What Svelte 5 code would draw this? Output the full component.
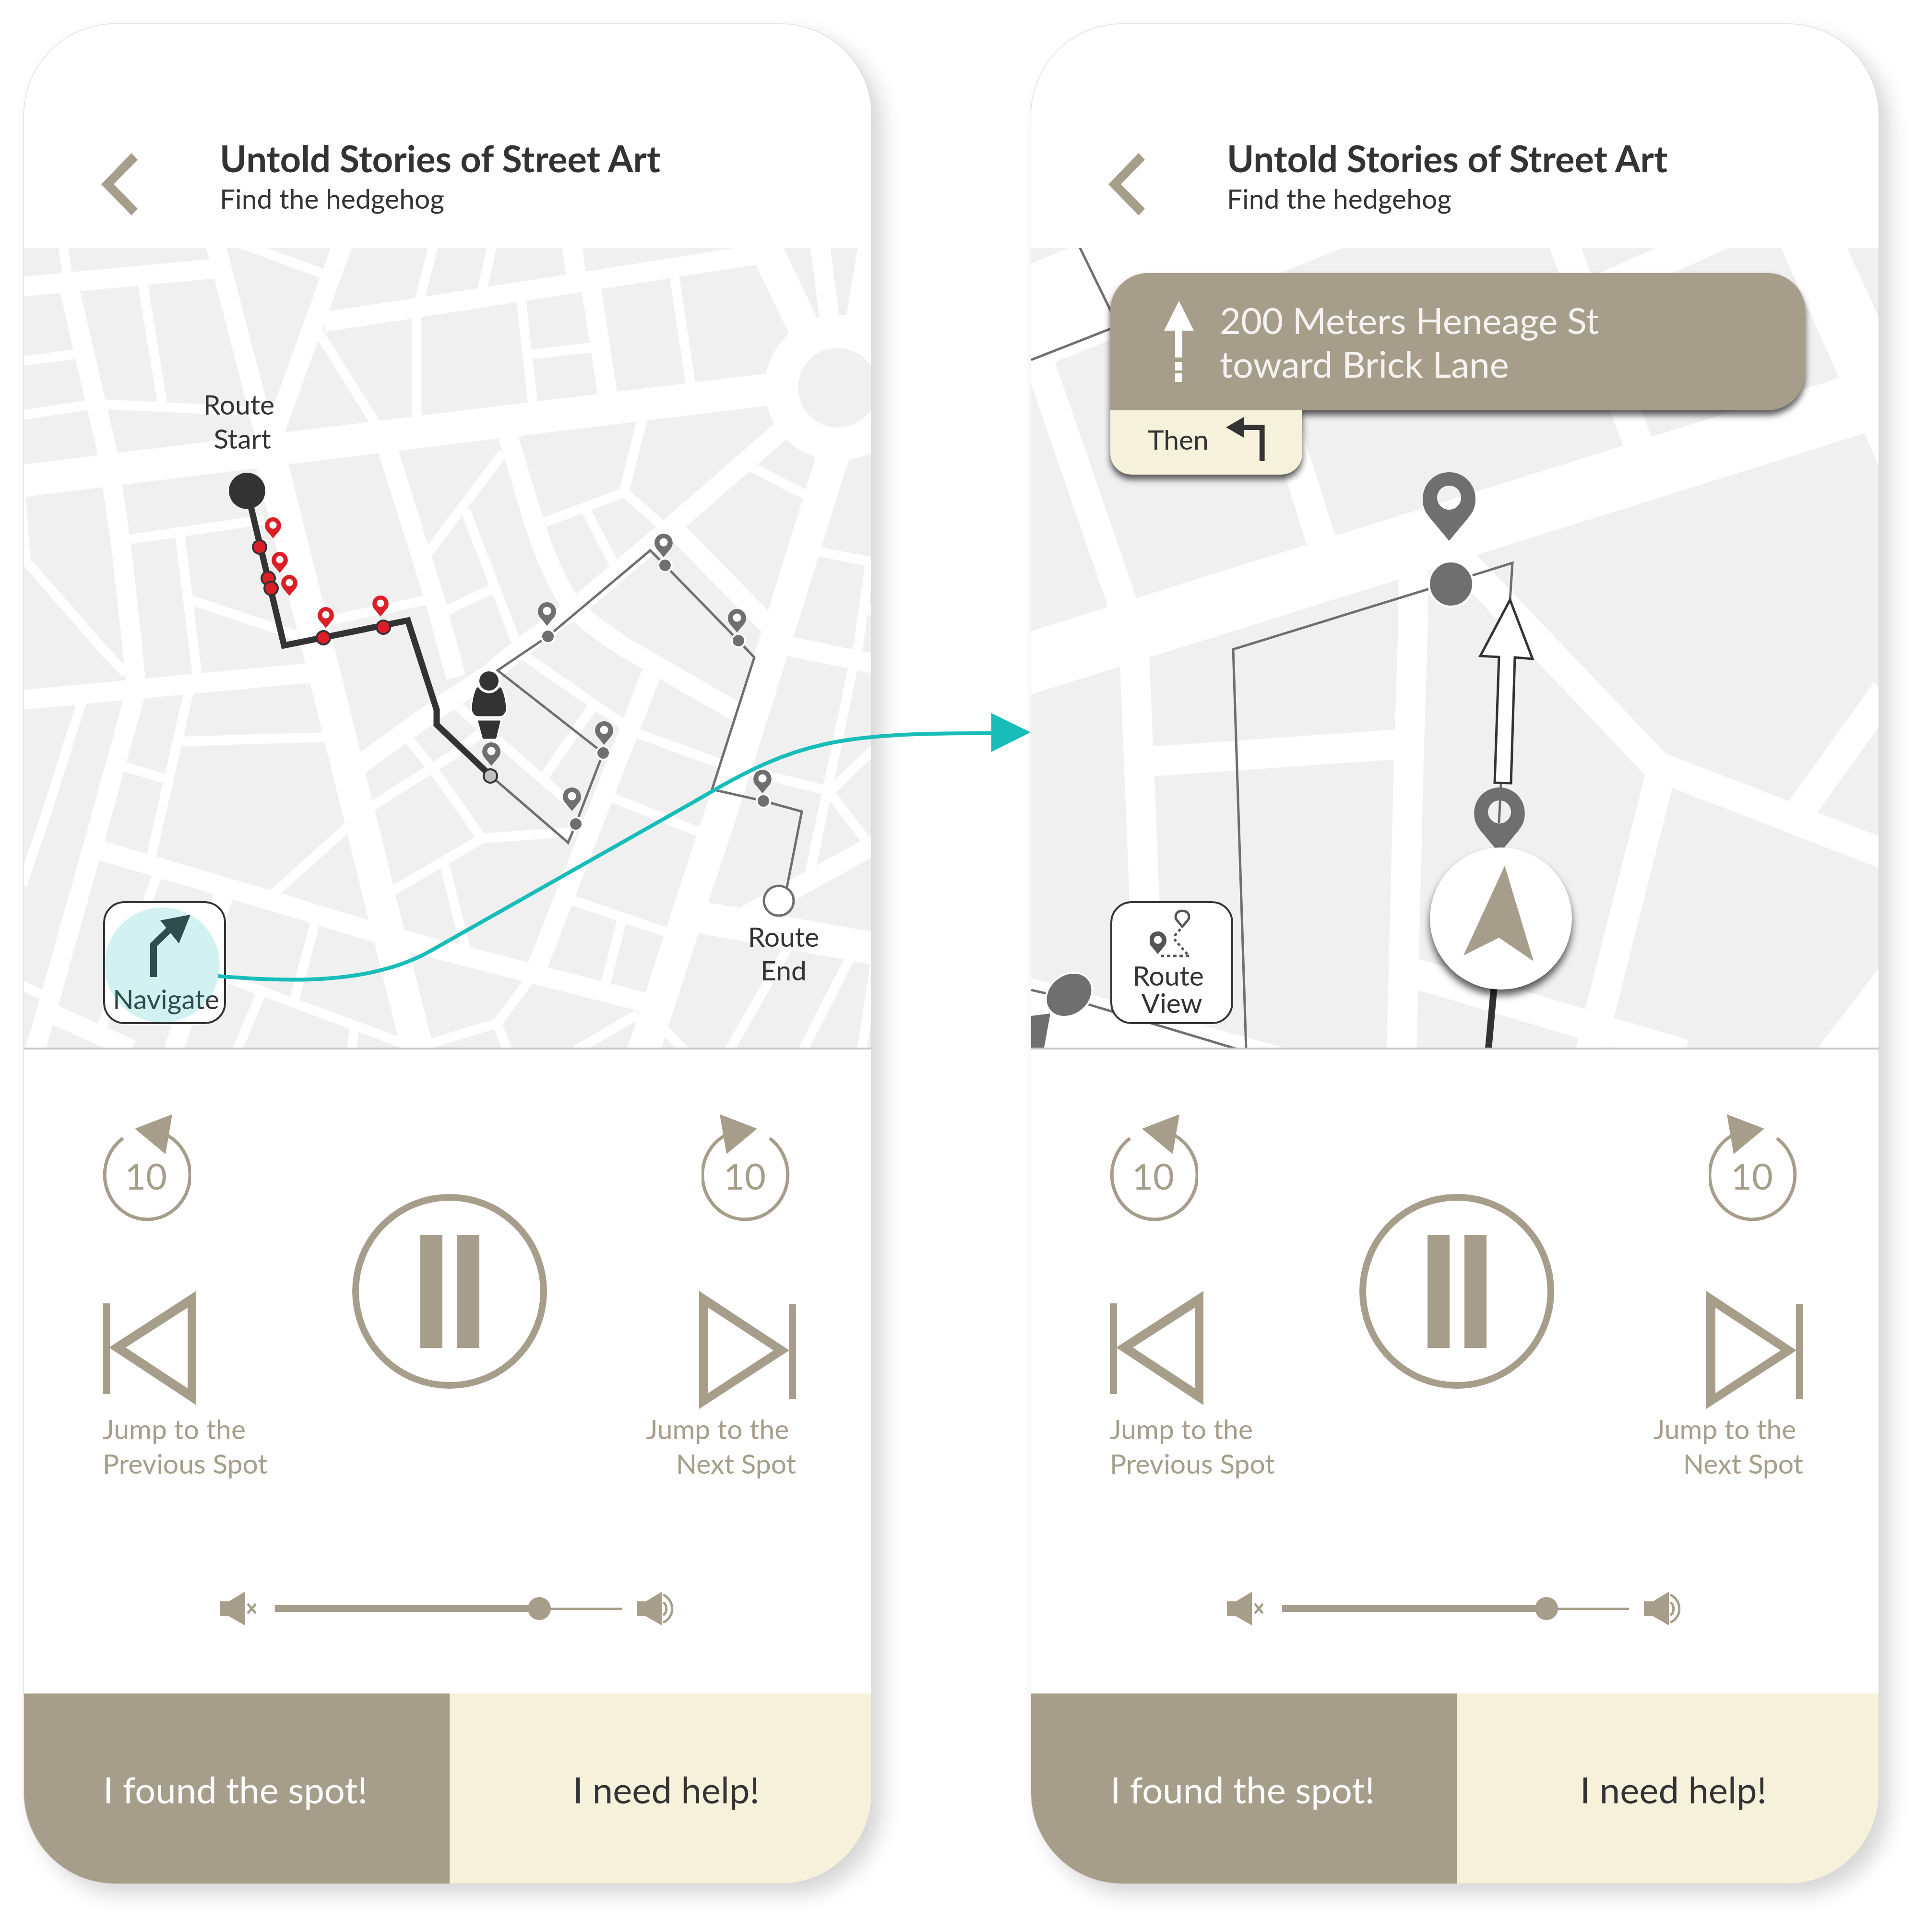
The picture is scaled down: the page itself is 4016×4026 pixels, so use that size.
<script>
  const title = 'Untold Stories of Street Art';
  const subtitle = 'Find the hedgehog';

  let volumes = $state([78, 78]);

  // Pin outline, drawn from its top centre; the tip is 143 units below.
  const pinShape =
    'M0 0C31 0 55 25 55 56C55 75 48 85 40 95L0 143L-40 95C-48 85 -55 75 -55 56C-55 25 -31 0 0 0Z';
  const pinHole = 'M0 28a25 25 0 1 0 .1 0Z';

  // Streets of the overview map, grouped by road class.
  const lanes = [
    'M131 510L140 572', 'M44 1037L53 1165', 'M40 754L165 738', 'M40 867L190 844', 'M190 842L436 854L520 857',
    'M297 590L339 845', 'M500 508L680 574', 'M904 510L875 625', 'M665 695L785 887', 'M868 640V895',
    'M1026 510L1005 605', 'M1086 625L1111 848', 'M1105 740L1240 724', 'M1405 575L1440 805',
    'M1339 872L1300 1028L1135 1089', 'M1298 1024L1380 1096', 'M1220 1062L1280 1177', 'M1048 945L888 1158',
    'M970 1064L1074 1335', 'M912 1282L1026 1228', 'M262 1126L550 1084', 'M375 1115L411 1408',
    'M400 1252L620 1326', 'M670 1297L890 1251', 'M50 1165L211 1350L262 1404', 'M170 1464L97 1695L46 1845',
    'M394 1440L315 1786', 'M328 1824L212 2142', 'M378 1546L680 1537', 'M258 1598L344 1624',
    'M568 1865L724 1725', 'M657 1922L614 2084', 'M470 2038L580 2079L786 2155L880 2192', 'M544 2070L494 2190',
    'M739 2142L732 2190', 'M46 2054L92 2077', 'M850 1540L901 1602L930 1642L1004 1748L1200 1734',
    'M1005 1748L927 1794L820 1856', 'M926 1800L970 1975', 'M775 1681L940 1577L1000 1530',
    'M948 1468L1037 1544L1185 1672', 'M1092 1367L1300 1511', 'M1235 1474L1136 1617', 'M1101 2046L1036 2133L880 2181',
    'M1035 2130L1058 2192', 'M1328 1529L1500 1592', 'M1278 1664L1458 1735', 'M1190 1876L1390 1944',
    'M1296 1918L1261 2055', 'M1566 974L1682 1034', 'M1704 1150L1826 1174', 'M1813 1178L1788 1350L1776 1400L1688 1820',
    'M1804 1270L1826 1276', 'M1558 1607L1730 1650L1826 1557', 'M1724 1646L1802 1748', 'M1642 1976L1520 2190',
    'M1771 1998L1673 2190', 'M1824 2010L1796 2190', 'M1330 2114L1200 2190', 'M1386 2149L1430 2193'
  ].join('');

  const streets = [
    'M40 599L455 560', 'M449 510L531 825L560 940', 'M145 605L224 944L252 1134L276 1350L283 1425L279 1457L196 1756L102 2090L72 2194',
    'M714 510L570 907', 'M675 672L930 633L1600 528', 'M1192 510L1201 580', 'M1228 575L1268 835', 'M1709 510L1732 690',
    'M1640 888L1406 1092L1216 1253L1081 1355L1017 1408L940 1458L750 1594',
    'M1056 900L1111 1083C1135 1160 1165 1225 1190 1260C1215 1290 1250 1316 1302 1350L1545 1490',
    'M800 912L907 1253L950 1412', 'M40 1460L690 1399', 'M205 1772L559 1876L772 1941L901 1976L1122 2033L1345 2090',
    'M466 1865L362 2190', 'M105 2112L275 2188', 'M1357 1405L1118 2020', 'M1412 1110L1600 1302',
    'M1640 1347L1826 1385', 'M1830 1757L1535 1920'
  ].join('');

  const avenues = [
    'M40 1004L940 893L1746 795', 'M562 950L681 1424L784 1843L871 2192', 'M1590 506L1705 745',
    'M1742 932L1636 1272L1520 1641L1425 1931L1340 2194', 'M1440 1909L1830 1979'
  ].join('');

  const spots = [
    [1386, 1179], [1142, 1327], [1539, 1336], [1257, 1570], [1200, 1718], [1591, 1670]
  ];
  const spotPins = [
    [1383, 1113], [1140, 1256], [1536, 1270], [1259, 1504], [1024, 1548], [1192, 1642], [1589, 1605]
  ];
  const visited = [[541, 1141], [559, 1206], [565, 1227], [674, 1330], [799, 1308]];
  const visitedPins = [[569, 1079], [583, 1151], [603, 1199], [679, 1266], [793, 1242]];

  // Streets of the close-up map.
  const nearStreets = [
    'M2140 680L2350 1289', 'M2660 830L2765 1165', 'M3256 500L3420 942', 'M3600 485L3290 623',
    'M2946 1190L2944 1330L2936 1585L2921 2194', 'M3035 1158L3220 1352L3455 1599', 'M3445 1594L3930 1782',
    'M3464 1600L3334 2112L3314 2194', 'M2930 2024L3510 2198', 'M3745 1700L3930 1442',
    'M2364 1360L2395 2120', 'M2395 1588L2915 1552'
  ].join('');
</script>

{#snippet pin(x, y, size, color)}
  <g transform="translate({x} {y}) scale({size})">
    <circle cx="0" cy="53" r="30" fill="#fff" />
    <path d={pinShape + pinHole} fill={color} fill-rule="evenodd" />
  </g>
{/snippet}

{#snippet heading()}
  <header class="top">
    <button class="plain back" aria-label="Back">
      <svg width="76" height="130" viewBox="0 0 76 130" aria-hidden="true">
        <path d="M63 0L76 14L26 65L76 116L63 130L0 65Z" fill="#a69e8a" />
      </svg>
    </button>
    <div>
      <h1>{title}</h1>
      <p class="subtitle">{subtitle}</p>
    </div>
  </header>
{/snippet}

{#snippet player(index)}
  <section class="player" aria-label="Player">
    <div class="side">
      <button class="plain skip" aria-label="Back 10 seconds">
        <svg width="184" height="224" viewBox="215 2322 184 224" aria-hidden="true">
          <path d="M257 2372A89 93 0 1 0 350 2366" fill="none" stroke="#a69e8a" stroke-width="7" />
          <path d="M360 2322L282 2352L346 2405Z" fill="#a69e8a" />
        </svg>
        <span class="seconds">10</span>
      </button>
      <button class="plain jump">
        <svg width="202" height="246" viewBox="215 2690 202 246" aria-hidden="true">
          <path d="M215 2716H230V2905H215Z" fill="#a69e8a" />
          <path d="M410 2690V2928L228 2808ZM392 2725L263 2808L392 2893Z" fill="#a69e8a" fill-rule="evenodd" />
        </svg>
        <span>Jump to the<br />Previous Spot</span>
      </button>
    </div>
    <button class="plain pause" aria-label="Pause">
      <svg width="406" height="406" viewBox="0 0 406 406" aria-hidden="true">
        <circle cx="203" cy="203" r="196" fill="none" stroke="#a69e8a" stroke-width="14" />
        <path d="M142 86H188V321H142ZM219 86H265V321H219Z" fill="#a69e8a" />
      </svg>
    </button>
    <div class="side end">
      <button class="plain skip forward" aria-label="Forward 10 seconds">
        <svg width="184" height="224" viewBox="0 0 184 224" aria-hidden="true">
          <path d="M142 50A89 93 0 1 1 49 44" fill="none" stroke="#a69e8a" stroke-width="7" />
          <path d="M38 0L116 30L52 83Z" fill="#a69e8a" />
        </svg>
        <span class="seconds">10</span>
      </button>
      <button class="plain jump">
        <svg width="202" height="246" viewBox="1456 2690 202 246" aria-hidden="true">
          <path d="M1643 2718H1658V2915H1643Z" fill="#a69e8a" />
          <path d="M1456 2690V2936L1644 2814ZM1475 2725L1611 2814L1475 2903Z" fill="#a69e8a" fill-rule="evenodd" />
        </svg>
        <span>Jump to the&nbsp;<br />Next Spot</span>
      </button>
    </div>
  </section>
  <div class="volume">
    <svg width="76" height="70" viewBox="0 0 76 70" aria-hidden="true">
      <path d="M0 20H19L52 0V70L19 51H0Z" fill="#a69e8a" />
      <path d="M58 25L75 45M75 25L58 45" stroke="#a69e8a" stroke-width="5" />
    </svg>
    <input
      type="range"
      min="0"
      max="100"
      aria-label="Volume"
      bind:value={volumes[index]}
      style="--fill: {volumes[index]}%"
    />
    <svg width="77" height="70" viewBox="0 0 77 70" aria-hidden="true">
      <path d="M0 20H19L52 0V70L19 51H0Z" fill="#a69e8a" />
      <path d="M55 6C80 18 80 53 55 64M55 22C64 28 64 43 55 49" fill="none" stroke="#a69e8a" stroke-width="5" />
    </svg>
  </div>
  <footer>
    <button class="found">I found the spot!</button>
    <button class="help">I need help!</button>
  </footer>
{/snippet}

<main>
  <article class="phone">
    {@render heading()}
    <div class="map">
      <svg class="canvas" viewBox="50 518 1766 1666" role="img" aria-label="Route map">
        <rect x="50" y="518" width="1766" height="1666" fill="#f0f0f0" />
        <g fill="none" stroke="#fff">
          <path d={lanes} stroke-width="20" />
          <path d={streets} stroke-width="41" />
          <path d={avenues} stroke-width="67" />
        </g>
        <path d="M1788 516L1762 670L1826 700V516Z" fill="#fff" />
        <circle cx="1746" cy="809" r="152" fill="#fff" />
        <circle cx="1746" cy="809" r="83" fill="#f0f0f0" />

        <path
          d="M1023 1618L1184 1757L1200 1718L1257 1570L1037 1398L1142 1327L1355 1148L1386 1179L1539 1336L1572 1371L1484 1646L1591 1670L1671 1692L1638 1860"
          fill="none" stroke="#6f6f6f" stroke-width="5" />
        {#each spots as [x, y]}
          <circle cx={x} cy={y} r="14" fill="#6f6f6f" stroke="#fff" stroke-width="4" />
        {/each}
        <circle cx="1623" cy="1878" r="31" fill="#fff" stroke="#6f6f6f" stroke-width="5" />

        <path d="M515 1024L592 1346L850 1294L910 1480V1511L1023 1618" fill="none" stroke="#333" stroke-width="13" />
        <circle cx="515" cy="1024" r="38" fill="#333" />
        {#each visited as [x, y]}
          <circle cx={x} cy={y} r="14" fill="#da1f26" stroke="#333" stroke-width="4" />
        {/each}
        {#each visitedPins as [x, y]}
          {@render pin(x, y, 0.306, '#da1f26')}
        {/each}
        <circle cx="1022" cy="1618" r="14" fill="#c0c0c0" stroke="#333" stroke-width="4" />
        {#each spotPins as [x, y]}
          {@render pin(x, y, 0.342, '#6f6f6f')}
        {/each}

        <g fill="#333" stroke="#fff" stroke-width="3">
          <path d="M993 1432C986 1445 982 1464 982 1478C982 1486 988 1495 996 1495H1042C1050 1495 1056 1486 1056 1478C1056 1464 1052 1445 1045 1432Z" />
          <path d="M994 1501H1045L1035 1542H1005Z" />
          <circle cx="1019" cy="1420" r="24" fill="#fff" />
          <circle cx="1019" cy="1420" r="20" stroke="none" />
        </g>

        <g class="place" text-anchor="middle">
          <text x="498" y="865">Route</text>
          <text x="505" y="936">Start</text>
          <text x="1633" y="1974">Route</text>
          <text x="1633" y="2044">End</text>
        </g>
      </svg>
      <button class="tile single">
        <svg width="112" height="132" viewBox="289 1906 112 132" aria-hidden="true">
          <path d="M319 2037V1970L357 1933" fill="none" stroke="#333" stroke-width="14" />
          <path d="M396 1907L333 1919L372 1967Z" fill="#333" />
        </svg>
        <span>Navigate</span>
      </button>
      <svg class="flow" viewBox="50 518 1766 1666" aria-hidden="true">
        <circle cx="338" cy="2012" r="120" fill="#18bdb9" fill-opacity="0.2" />
        <path
          d="M454 2035C590 2046 770 2056 900 1981L1460 1664C1660 1545 1750 1528 2070 1529"
          fill="none" stroke="#18bdb9" stroke-width="8" />
        <path d="M2066 1487L2148 1527L2066 1568Z" fill="#18bdb9" />
      </svg>
    </div>
    {@render player(0)}
  </article>

  <article class="phone">
    {@render heading()}
    <div class="map">
      <svg class="canvas" viewBox="2149 518 1766 1666" role="img" aria-label="Navigation map">
        <rect x="2149" y="518" width="1766" height="1666" fill="#f0f0f0" />
        <path d="M2149 550L2230 516H2804L2149 775Z" fill="#fff" />
        <path d="M2149 2039L2675 2184H2149ZM3920 2012L3789 2184H3920Z" fill="#fff" />
        <g fill="none" stroke="#fff">
          <path d={nearStreets} stroke-width="62" />
          <path d="M2120 1391L3950 818M3767 487L4000 1006" stroke-width="126" />
        </g>

        <g fill="none" stroke="#6f6f6f" stroke-width="5">
          <path d="M2250 516L2330 680L2149 751" />
          <path d="M2597 2186L2570 1354L3024 1214L3152 1174L3147 1251L3124 1716" />
          <path d="M2149 2064L2228 2082L2578 2187" />
        </g>
        <path d="M3128 1900L3102 2186" stroke="#333" stroke-width="14" />
        <ellipse cx="3024" cy="1218" rx="46" ry="47" fill="#6f6f6f" stroke="#fff" stroke-width="4" />
        <ellipse cx="2228" cy="2074" rx="52" ry="42" transform="rotate(-38 2228 2074)" fill="#6f6f6f" stroke="#fff" stroke-width="4" />
        <path d="M2149 2118L2189 2113L2176 2184H2149Z" fill="#6f6f6f" />
        <path
          d="M3147 1251L3085 1368L3124 1370L3115 1632L3149 1633L3157 1371L3194 1374Z"
          fill="#fff" stroke="#333" stroke-width="5" />
        <path d={pinShape + pinHole} transform="translate(3020 985)" fill="#6f6f6f" fill-rule="evenodd" />
        <path d={pinShape + pinHole} transform="translate(3125 1642) scale(0.96)" fill="#6f6f6f" fill-rule="evenodd" />
        <circle class="lifted" cx="3128" cy="1915" r="148" fill="#fff" />
        <path d="M3136 1805L3050 1992L3124 1955L3196 2004Z" fill="#a69e8a" />
      </svg>
      <section class="directions">
        <div class="now">
          <svg width="62" height="170" viewBox="2426 633 62 170" aria-hidden="true">
            <path d="M2457 633L2426 695H2449V751H2464V695H2488ZM2449 760H2464V778H2449ZM2449 784H2464V802H2449Z" fill="#fff" />
          </svg>
          <p>200 Meters Heneage St<br />toward Brick Lane</p>
        </div>
        <div class="then">
          <span>Then</span>
          <svg width="83" height="94" viewBox="2553 870 83 94" aria-hidden="true">
            <path d="M2553 892L2591 870V914Z" fill="#333" />
            <path d="M2588 892H2630V964" fill="none" stroke="#333" stroke-width="11" />
          </svg>
        </div>
      </section>
      <button class="tile">
        <svg width="92" height="102" viewBox="2396 1896 92 102" aria-hidden="true">
          <path d={pinShape + pinHole} transform="translate(2413 1943) scale(0.33)" fill="#555" fill-rule="evenodd" />
          <path d="M2464 1900C2480 1900 2480 1916 2475 1920L2464 1933L2453 1920C2448 1916 2448 1900 2464 1900Z" fill="none" stroke="#555" stroke-width="5" />
          <path d="M2460 1938L2449 1951V1961L2476 1992" fill="none" stroke="#555" stroke-width="5" stroke-dasharray="6 6" />
          <path d="M2419 1994H2480" stroke="#555" stroke-width="5" stroke-dasharray="7 6" />
        </svg>
        <span>Route&nbsp;<br />View</span>
      </button>
    </div>
    {@render player(1)}
  </article>
</main>

<style>
  :global(body) {
    margin: 0;
    background: #fff;
    font-family: Lato, 'Liberation Sans', sans-serif;
    color: #333;
  }

  main {
    display: grid;
    grid-template-columns: 1fr 1fr;
    gap: 333px;
    padding: 50px 101px 100px 50px;
  }

  .phone {
    display: flex;
    flex-direction: column;
    border-radius: 190px;
    background: #fff;
    box-shadow: 0 0 1px 1px #d4d4d4, 22px 22px 44px rgba(0, 0, 0, 0.17);
  }

  h1,
  p {
    margin: 0;
  }

  button {
    font: inherit;
    color: inherit;
    cursor: pointer;
  }

  svg {
    display: block;
  }

  .plain {
    padding: 0;
    border: 0;
    background: none;
  }

  .top {
    display: flex;
    align-items: flex-start;
    gap: 171px;
    padding: 238px 160px 68px 161px;
  }

  .back {
    margin-top: 31px;
  }

  h1 {
    font-size: 76px;
    line-height: 84px;
    font-weight: 700;
  }

  .subtitle {
    margin-top: 5px;
    font-size: 57px;
    line-height: 72px;
  }

  .map {
    position: relative;
    border-bottom: 4px solid #c8c8c8;
  }

  .canvas {
    width: 100%;
    height: auto;
  }

  .place {
    font-size: 57px;
    fill: #333;
  }

  .lifted {
    filter: drop-shadow(0 12px 8px rgba(0, 0, 0, 0.65));
  }

  .flow {
    position: absolute;
    inset: 0;
    z-index: 2;
    width: 100%;
    overflow: visible;
    pointer-events: none;
  }

  .tile {
    position: absolute;
    left: 165px;
    bottom: 49px;
    display: flex;
    flex-direction: column;
    align-items: center;
    justify-content: flex-end;
    box-sizing: border-box;
    width: 256px;
    height: 256px;
    padding: 0 0 12px;
    border: 4px solid #333;
    border-radius: 44px;
    background: #fff;
    font-size: 57px;
    line-height: 57px;
  }

  .tile svg {
    margin-bottom: 8px;
  }

  .single {
    padding: 0 0 20px 6px;
  }

  .single svg {
    margin-bottom: 16px;
  }

  .directions {
    position: absolute;
    top: 52px;
    left: 165px;
    right: 153px;
    filter: drop-shadow(0 10px 7px rgba(0, 0, 0, 0.65));
  }

  .now {
    display: flex;
    align-items: center;
    gap: 54px;
    padding: 52px 112px;
    border-radius: 78px 78px 78px 0;
    background: #a69e8a;
    color: #f5f2f0;
    font-size: 76px;
    line-height: 91px;
  }

  .then {
    display: flex;
    align-items: center;
    gap: 36px;
    box-sizing: border-box;
    width: 400px;
    height: 134px;
    padding: 0 78px 14px;
    border-radius: 0 0 44px 44px;
    background: #f6f1db;
    font-size: 57px;
  }

  .player {
    display: grid;
    grid-template-columns: 1fr auto 1fr;
    padding: 135px 157px 0 164px;
    color: #a69e8a;
  }

  .side {
    display: flex;
    flex-direction: column;
    align-items: flex-start;
    gap: 144px;
  }

  .end {
    align-items: flex-end;
  }

  .skip {
    display: grid;
  }

  .skip > * {
    grid-area: 1 / 1;
  }

  .forward {
    margin-right: 13px;
  }

  .seconds {
    padding: 82px 4px 0 0;
    font-size: 76px;
    line-height: 91px;
  }

  .pause {
    align-self: start;
    margin-top: 166px;
  }

  .jump {
    display: flex;
    flex-direction: column;
    gap: 5px;
    text-align: left;
    font-size: 57px;
    line-height: 72px;
  }

  .end .jump {
    align-items: flex-end;
    text-align: right;
  }

  .volume {
    display: flex;
    align-items: center;
    padding: 232px 412px 142px 408px;
  }

  input {
    flex: 1;
    min-width: 0;
    height: 48px;
    margin: 0 31px 0 39px;
    appearance: none;
    background:
      linear-gradient(#a69e8a, #a69e8a) left center / var(--fill) 14px no-repeat,
      linear-gradient(#a69e8a, #a69e8a) left center / 100% 5px no-repeat;
  }

  input::-webkit-slider-thumb {
    appearance: none;
    width: 48px;
    height: 48px;
    border-radius: 50%;
    background: #a69e8a;
  }

  footer {
    display: grid;
    grid-template-columns: 887fr 879fr;
    height: 396px;
  }

  footer button {
    border: 0;
    font-size: 76px;
    line-height: 92px;
  }

  .found {
    padding: 4px 6px 0 0;
    border-radius: 0 0 0 190px;
    background: #a69e8a;
    color: #fff;
  }

  .help {
    padding: 4px 0 0 24px;
    border-radius: 0 0 190px 0;
    background: #f6f1db;
  }
</style>
